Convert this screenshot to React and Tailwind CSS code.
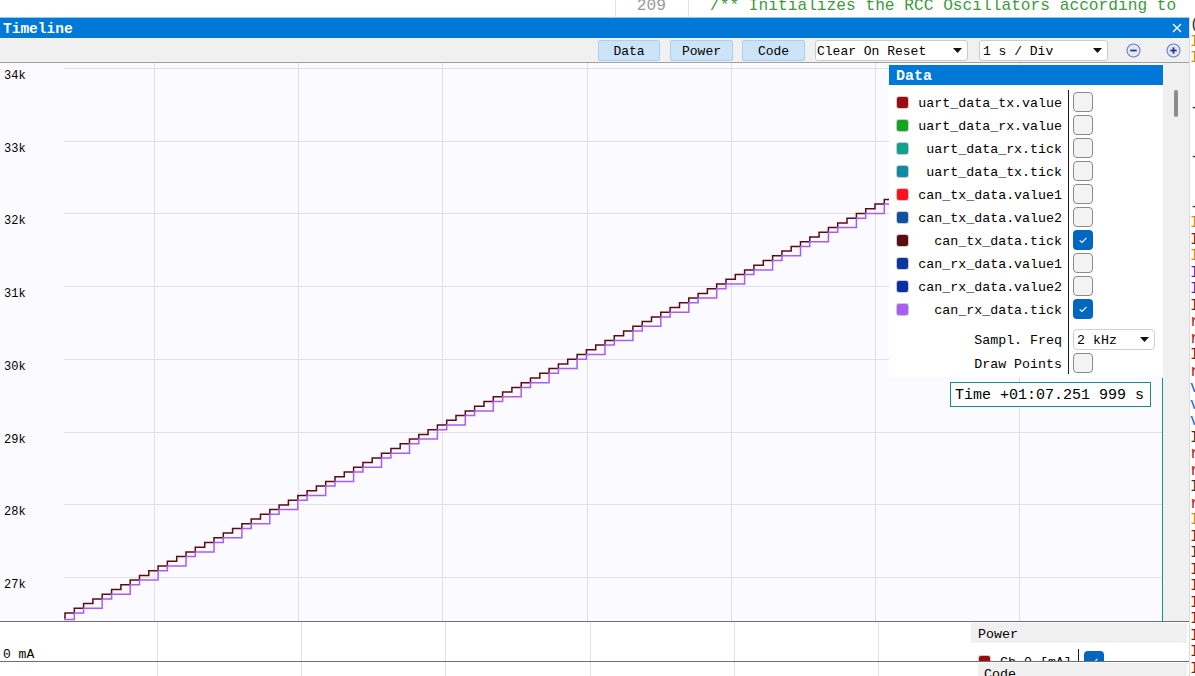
import React from "react";

// legend rows of the Data panel
const SERIES = [
  { name: "uart_data_tx.value", sw: "bg-[#9e0b0f]", on: false },
  { name: "uart_data_rx.value", sw: "bg-[#12a320]", on: false },
  { name: "uart_data_rx.tick", sw: "bg-[#10a38c]", on: false },
  { name: "uart_data_tx.tick", sw: "bg-[#108aa3]", on: false },
  { name: "can_tx_data.value1", sw: "bg-[#ff1020]", on: false },
  { name: "can_tx_data.value2", sw: "bg-[#0b52a3]", on: false },
  { name: "can_tx_data.tick", sw: "bg-[#5a0c10]", on: true },
  { name: "can_rx_data.value1", sw: "bg-[#0a36a0]", on: false },
  { name: "can_rx_data.value2", sw: "bg-[#0a2ea5]", on: false },
  { name: "can_rx_data.tick", sw: "bg-[#a95cf6]", on: true },
];

const Y_LABELS = ["34k", "33k", "32k", "31k", "30k", "29k", "28k", "27k"];
const H_LINES = Y_LABELS.map((_, i) => 5 + 72.7 * i);
const V_LINES = [0, 1, 2, 3, 4, 5, 6].map((k) => 154 + 144.2 * k);
const P_LINES = [0, 1, 2, 3, 4, 5].map((k) => 157 + 144.2 * k);

// code editor glyphs peeking out at the right edge
const EDGE = [
  ["(", "text-[#333333]"], ["I", "text-[#d9861a]"], ["I", "text-[#d9861a]"], [" ", ""], [" ", ""],
  ["-", "text-[#333333]"], [" ", ""], [" ", ""], ["-", "text-[#333333]"], [" ", ""], [" ", ""],
  ["-", "text-[#333333]"], ["I", "text-[#d9861a]"], ["I", "text-[#8b1a1a]"], ["I", "text-[#d9861a]"],
  ["I", "text-[#6a1ab0]"], ["I", "text-[#6a1ab0]"], ["I", "text-[#8b1a1a]"], ["r", "text-[#c02020]"],
  ["r", "text-[#c02020]"], ["I", "text-[#8b1a1a]"], ["r", "text-[#c02020]"], ["v", "text-[#2a5fcf]"],
  ["v", "text-[#2a5fcf]"], ["v", "text-[#2a5fcf]"], ["I", "text-[#333333]"], ["r", "text-[#c02020]"],
  ["r", "text-[#c02020]"], ["I", "text-[#333333]"], ["r", "text-[#c02020]"], ["I", "text-[#d9861a]"],
  ["I", "text-[#8b1a1a]"], ["I", "text-[#333333]"], ["I", "text-[#8b1a1a]"], ["I", "text-[#8b1a1a]"],
  ["I", "text-[#8b1a1a]"], ["I", "text-[#8b1a1a]"], ["I", "text-[#8b1a1a]"], ["I", "text-[#8b1a1a]"],
  ["I", "text-[#8b1a1a]"],
];

// staircase traces: tx steps every sample, rx is a lagged resample of it
function stairs() {
  const x = (j) => (65 + 9.31 * j).toFixed(1);
  const lvl = (j) => (613 - 4.7 * j - 63).toFixed(1);
  let m = `M64 ${lvl(-1)}`;
  let p = `M64 556.5`;
  for (let j = 0; j <= 88; j++) {
    m += ` H${x(j)} V${lvl(j)}`;
    if (j % 3 !== 0) p += ` H${x(j)} V${lvl(j - 1)}`;
  }
  m += " H889";
  p += " H889";
  return { m, p };
}

function Check({ on }) {
  if (on)
    return (
      <span className="flex h-[20px] w-[20px] items-center justify-center rounded-[4px] bg-[#0067c0]">
        <svg width="12" height="12" viewBox="0 0 12 12">
          <path d="M2.6 6.3 5 8.5 9.5 3.8" fill="none" stroke="#ffffff" strokeWidth="1.1" />
        </svg>
      </span>
    );
  return <span className="block h-[20px] w-[20px] rounded-[4px] border border-[#8a8a8a] bg-[#f3f3f3]" />;
}

function Caret() {
  return (
    <svg width="9" height="5" viewBox="0 0 9 5">
      <path d="M0 0 H9 L4.5 5 Z" fill="#111111" />
    </svg>
  );
}

function ZoomIcon({ plus }) {
  return (
    <svg width="15" height="15" viewBox="0 0 15 15">
      <circle cx="7.5" cy="7.5" r="6.5" fill="#e3e6f5" stroke="#6c7cc0" strokeWidth="1.1" />
      <path d="M4.3 7.5 H10.7" stroke="#26368a" strokeWidth="1.8" />
      {plus && <path d="M7.5 4.3 V10.7" stroke="#26368a" strokeWidth="1.8" />}
    </svg>
  );
}

function ToolButton({ children, w }) {
  return (
    <button className={`flex h-[21px] ${w} items-center justify-center rounded-[2px] border border-[#a9d0f2] bg-[#cce4f7] text-[13px] text-black`}>
      <span className="pt-[3px]">{children}</span>
    </button>
  );
}

export default function App() {
  const { m, p } = stairs();

  return (
    <div className="h-[676px] w-[1195px] overflow-hidden bg-white font-['Liberation_Mono','DejaVu_Sans_Mono',monospace] text-black">
      {/* editor line behind the panel */}
      <div className="flex h-[17px] overflow-hidden whitespace-pre bg-white text-[16.2px] leading-[16px]">
        <div className="w-[615px] shrink-0" />
        <div className="w-[73px] shrink-0 border-l border-[#e3e3e3] pr-[22px] text-right text-[#9a9a9a]">
          <div className="-mt-[2px]">209</div>
        </div>
        <div className="border-l border-[#e3e3e3] pl-[21px] text-[#3c9a3c]">
          <div className="-mt-[2px]">/** Initializes the RCC Oscillators according to</div>
        </div>
      </div>

      <div className="flex h-[659px]">
        {/* Timeline panel */}
        <div className="flex w-[1189px] shrink-0 flex-col">
          <div className="flex h-[21px] items-center justify-between border-t border-[#99c8ee] bg-[#0078d7] pl-[3px] pr-[7px] text-white">
            <span className="pt-[2px] text-[14.5px] font-bold leading-[20px]">Timeline</span>
            <svg width="10" height="10" viewBox="0 0 10 10">
              <path d="M1 1 L9 9 M9 1 L1 9" stroke="#ffffff" strokeWidth="1.4" />
            </svg>
          </div>

          <div className="flex h-[25px] items-start justify-end border-b border-[#a0a0a0] bg-[#f0f0f0] pr-[8px] pt-[2px]">
            <div className="flex h-[21px] items-center">
              <ToolButton w="w-[62px]">Data</ToolButton>
              <div className="ml-[10px]"><ToolButton w="w-[63px]">Power</ToolButton></div>
              <div className="ml-[9px]"><ToolButton w="w-[63px]">Code</ToolButton></div>
              <div className="ml-[10px] flex h-[21px] w-[153px] items-center justify-between rounded-[3px] border border-[#cccccc] bg-white pl-[1px] pr-[5px] text-[13px]">
                <span className="pt-[3px]">Clear On Reset</span>
                <Caret />
              </div>
              <div className="ml-[11px] flex h-[21px] w-[129px] items-center justify-between rounded-[3px] border border-[#cccccc] bg-white pl-[3px] pr-[5px] text-[13px]">
                <span className="pt-[3px]">1 s / Div</span>
                <Caret />
              </div>
              <div className="ml-[18px] flex"><ZoomIcon /></div>
              <div className="ml-[25px] flex"><ZoomIcon plus /></div>
            </div>
          </div>

          {/* main chart */}
          <div className="flex h-[558px] shrink-0">
            <div className="relative flex-1 bg-[#fafaff]">
              <svg className="absolute inset-0" width="1163" height="558">
                {H_LINES.map((y) => (
                  <line key={y} x1="64" x2="1163" y1={Math.round(y) + 0.5} y2={Math.round(y) + 0.5} stroke="#e0e0e4" shapeRendering="crispEdges" />
                ))}
                {V_LINES.map((x) => (
                  <line key={x} x1={Math.round(x) + 0.5} x2={Math.round(x) + 0.5} y1="0" y2="558" stroke="#e0e0e4" shapeRendering="crispEdges" />
                ))}
                <path d={m} fill="none" stroke="#5a0c12" strokeWidth="1.5" />
                <path d={p} fill="none" stroke="#a95cf6" strokeWidth="1.5" />
              </svg>

              {Y_LABELS.map((l, i) => (
                <span key={l} className="absolute left-[4px] text-[12px] leading-[14px]" style={{ top: H_LINES[i] + 1 }}>
                  {l}
                </span>
              ))}

              {/* Data legend */}
              <div className="absolute left-[889px] top-[2px] w-[274px] bg-white pb-[3px] text-[13.3px]">
                <div className="h-[20px] bg-[#0078d7] pl-[7px] pt-[2px] text-[15px] font-bold leading-[19px] text-white">Data</div>
                <div className="flex pt-[5px]">
                  <div className="w-[179px] shrink-0 pl-[8px] pr-[6px]">
                    {SERIES.map((s) => (
                      <div key={s.name} className="flex h-[23px] items-center justify-between">
                        <span className={`mt-[2px] h-[11px] w-[11px] rounded-[2px] shadow-[0_0_0_1px_#cbcbcb] ${s.sw}`} />
                        <span className="pt-[4px]">{s.name}</span>
                      </div>
                    ))}
                    <div className="mt-[7px] flex h-[24px] items-center justify-end pt-[4px]">Sampl. Freq</div>
                    <div className="flex h-[23px] items-center justify-end pt-[4px]">Draw Points</div>
                  </div>
                  <div className="border-l border-[#1a1a1a] pl-[4px]">
                    {SERIES.map((s) => (
                      <div key={s.name} className="flex h-[23px] items-center">
                        <Check on={s.on} />
                      </div>
                    ))}
                    <div className="mt-[7px] flex h-[24px] items-center">
                      <div className="flex h-[21px] w-[82px] items-center justify-between rounded-[4px] border border-[#cfcfcf] bg-white pl-[3px] pr-[5px]">
                        <span className="pt-[3px]">2 kHz</span>
                        <Caret />
                      </div>
                    </div>
                    <div className="flex h-[23px] items-center">
                      <Check on={false} />
                    </div>
                  </div>
                </div>
              </div>

              {/* cursor readout */}
              <div className="absolute left-[950px] top-[319px] flex h-[25px] w-[201px] items-center border-[1.5px] border-[#1a8c8c] bg-white pl-[4px] text-[15px]">
                <span className="pt-[3px]">Time +01:07.251 999 s</span>
              </div>
              <div className="absolute bottom-0 left-[1162px] top-[315px] w-px bg-[#1a8c8c]" />
            </div>

            <div className="relative w-[26px] shrink-0 bg-[#f0f0f0]">
              <div className="absolute left-[11px] top-[27px] h-[27px] w-[4px] rounded-full bg-[#8c8c8c]" />
            </div>
          </div>

          {/* power strip */}
          <div className="relative h-[40px] shrink-0 overflow-hidden border-t border-[#6f6f6f] bg-white text-[13px]">
            <svg className="absolute inset-0" width="1189" height="39">
              {P_LINES.map((x) => (
                <line key={x} x1={Math.round(x) + 0.5} x2={Math.round(x) + 0.5} y1="0" y2="39" stroke="#e0e0e0" shapeRendering="crispEdges" />
              ))}
            </svg>
            <span className="absolute left-[3px] top-[25px] leading-[16px]">0 mA</span>
            <div className="absolute left-[971px] top-[1px] w-[216px] bg-white text-[13.3px]">
              <div className="h-[20px] bg-[#f0f0f0] pl-[7px] pt-[2px] leading-[19px]">Power</div>
              <div className="mt-[6px] flex h-[23px]">
                <div className="flex w-[107px] shrink-0 items-center pl-[8px]">
                  <span className="mt-[2px] h-[11px] w-[11px] rounded-[2px] bg-[#9e0b0f] shadow-[0_0_0_1px_#cbcbcb]" />
                  <span className="ml-[10px] pt-[4px]">Ch 0 [mA]</span>
                </div>
                <div className="flex items-center border-l border-[#1a1a1a] pl-[5px]">
                  <Check on />
                </div>
              </div>
            </div>
          </div>

          {/* code strip */}
          <div className="relative flex-1 overflow-hidden border-t border-[#6f6f6f] bg-white text-[13.3px]">
            <svg className="absolute inset-0" width="1189" height="14">
              {P_LINES.map((x) => (
                <line key={x} x1={Math.round(x) + 0.5} x2={Math.round(x) + 0.5} y1="0" y2="14" stroke="#e0e0e0" shapeRendering="crispEdges" />
              ))}
            </svg>
            <div className="absolute left-[978px] top-[1px] h-[20px] w-[209px] bg-[#f0f0f0] pl-[6px] pt-[2px] leading-[19px]">Code</div>
          </div>
        </div>

        {/* editor text cut off on the right */}
        <div className="w-[6px] shrink-0 overflow-hidden whitespace-pre border-l border-[#dcdcdc] text-[16px] leading-[16.5px]">
          {EDGE.map(([ch, c], i) => (
            <div key={i} className={`h-[16.5px] ${c}`}>{ch}</div>
          ))}
        </div>
      </div>
    </div>
  );
}
